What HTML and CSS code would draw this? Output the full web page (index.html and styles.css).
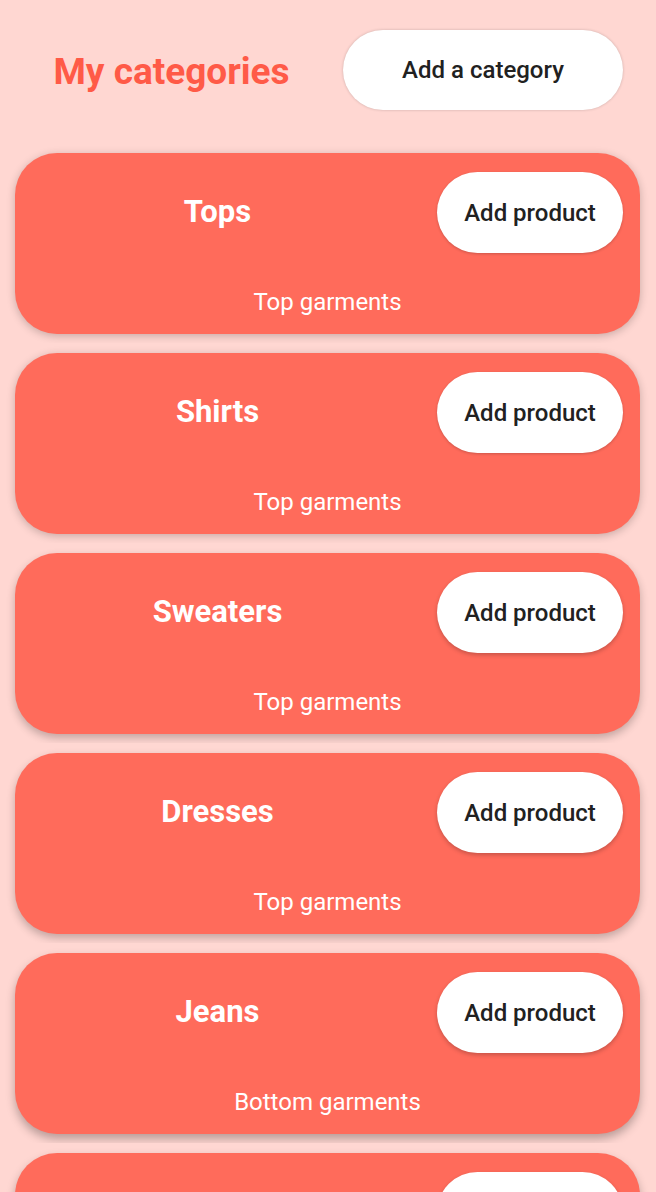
FILE: index.html
```html
<!DOCTYPE html>
<html lang="en">
<head>
<meta charset="utf-8">
<meta name="viewport" content="width=device-width, initial-scale=1">
<title>My categories</title>
<link rel="stylesheet" href="styles.css">
</head>
<body>
<header class="header">
  <h1 class="title">My categories</h1>
  <button class="button button-wide" type="button">Add a category</button>
</header>
<main class="list">
  <section class="card"><div class="card-top"><h2 class="name">Tops</h2><button class="button" type="button">Add product</button></div><p class="kind">Top garments</p></section>
  <section class="card"><div class="card-top"><h2 class="name">Shirts</h2><button class="button" type="button">Add product</button></div><p class="kind">Top garments</p></section>
  <section class="card"><div class="card-top"><h2 class="name">Sweaters</h2><button class="button" type="button">Add product</button></div><p class="kind">Top garments</p></section>
  <section class="card"><div class="card-top"><h2 class="name">Dresses</h2><button class="button" type="button">Add product</button></div><p class="kind">Top garments</p></section>
  <section class="card"><div class="card-top"><h2 class="name">Jeans</h2><button class="button" type="button">Add product</button></div><p class="kind">Bottom garments</p></section>
  <section class="card"><div class="card-top"><h2 class="name">Skirts</h2><button class="button" type="button">Add product</button></div><p class="kind">Bottom garments</p></section>
</main>
</body>
</html>
```

FILE: styles.css
```css
* { box-sizing: border-box; }
body {
  display: flex;
  flex-direction: column;
  height: 100vh;
  margin: 0;
  background: #ffd7d2;
  font-family: Roboto, "Liberation Sans", sans-serif;
}
.header {
  display: flex;
  flex: none;
  align-items: center;
  padding: 30px 33px 0 0;
}
.title {
  flex: 1;
  margin: 0;
  padding-top: 3px;
  color: #ff5a47;
  font-size: 37px;
  line-height: 44px;
  font-weight: 700;
  text-align: center;
}
.button {
  width: 186px;
  height: 81px;
  padding: 0;
  border: 0;
  border-radius: 41px;
  background: #fff;
  box-shadow: 0 2px 4px rgba(0, 0, 0, 0.22);
  color: #212121;
  font: 500 24px/28px Roboto, "Liberation Sans", sans-serif;
  text-align: center;
}
.button-wide {
  width: 280px;
  height: 80px;
  box-shadow: 0 0 3px rgba(0, 0, 0, 0.2);
}
.list {
  display: flex;
  flex: 1;
  flex-direction: column;
  gap: 19px;
  min-height: 0;
  padding: 43px 16px 19px 15px;
  overflow-y: auto;
  scrollbar-width: none;
}
/* Shadows deepen down the list, as if lit from the top of the screen. */
.card {
  flex: none;
  padding: 19px 17px 18px 0;
  border-radius: 42px;
  background: #ff6b5b;
  box-shadow: 0 2px 9px rgba(0, 0, 0, 0.22);
  clip-path: inset(-16px -16px -9px);
  color: #fff;
}
.card:nth-child(n + 3) { box-shadow: 0 4px 9px rgba(0, 0, 0, 0.24); }
.card:nth-child(n + 5) { box-shadow: 0 5px 10px rgba(0, 0, 0, 0.28); }
.card:nth-child(-n + 2) .button { box-shadow: 0 1px 3px rgba(0, 0, 0, 0.2); }
.card-top {
  display: flex;
  gap: 17px;
  align-items: center;
}
.name {
  flex: 1;
  margin: 0;
  padding-bottom: 2px;
  font-size: 31px;
  line-height: 36px;
  font-weight: 700;
  text-align: center;
}
.kind {
  margin: 35px -17px 0 0;
  font-size: 24px;
  line-height: 28px;
  text-align: center;
}
```
